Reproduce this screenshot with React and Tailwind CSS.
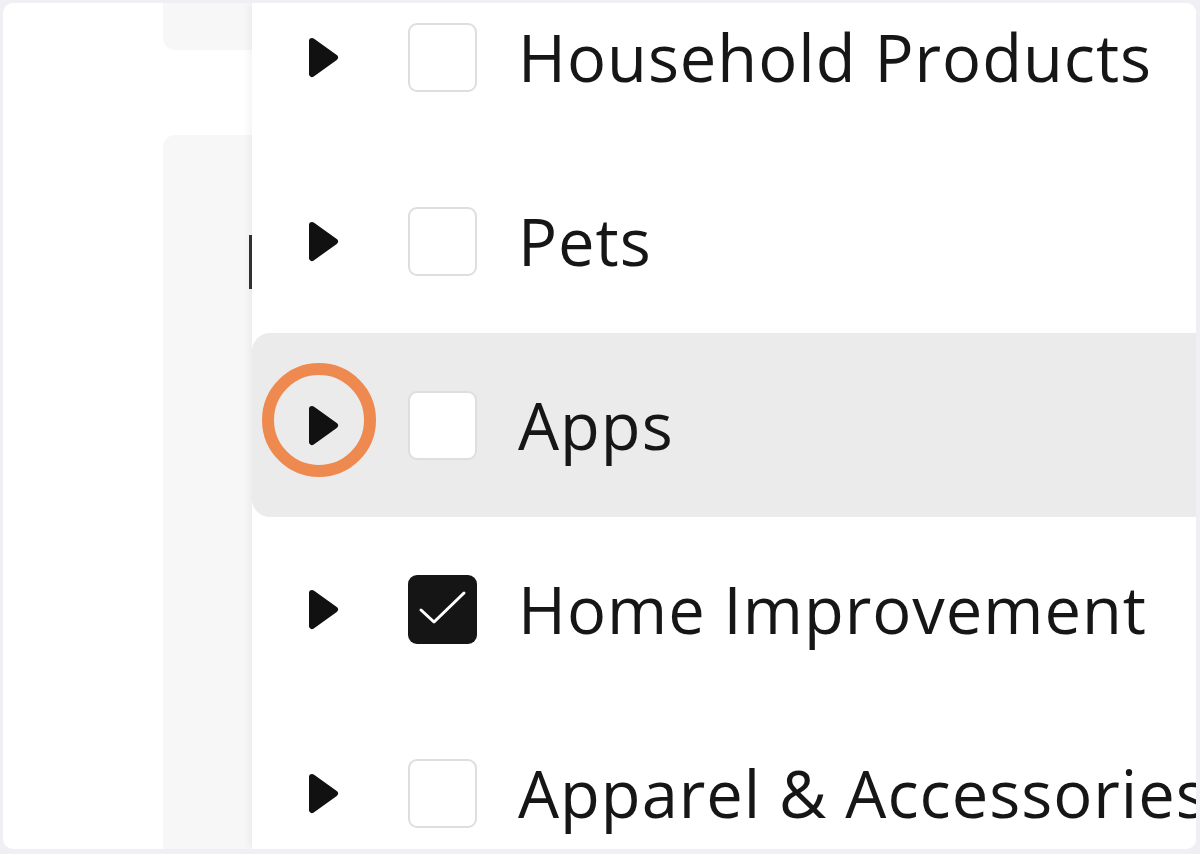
import React from 'react';

const rows = [
  { label: 'Household Products', checked: false },
  { label: 'Pets', checked: false },
  { label: 'Apps', checked: false, active: true },
  { label: 'Home Improvement', checked: true },
  { label: 'Apparel & Accessories', checked: false },
];

const Arrow = () => (
  <svg width="31" height="41" viewBox="0 0 31 41" className="shrink-0">
    <path d="M4 4 L27 20.5 L4 37 Z" fill="#111" stroke="#111" strokeWidth="6" strokeLinejoin="round" />
  </svg>
);

const Checkbox = ({ checked }) =>
  checked ? (
    <div className="w-[69px] h-[69px] shrink-0 rounded-[9px] bg-[#151515] flex items-center justify-center">
      <svg width="69" height="69" viewBox="0 0 69 69">
        <path d="M13 35 L26 47 L56 18" fill="none" stroke="#fff" strokeWidth="3" strokeLinecap="round" strokeLinejoin="round" />
      </svg>
    </div>
  ) : (
    <div className="w-[69px] h-[69px] shrink-0 rounded-[9px] bg-white border-2 border-[#dedede]" />
  );

const Row = ({ label, checked, active }) => (
  <div
    className={`relative h-[184px] flex items-center pl-[56px] rounded-l-[18px] ${
      active ? 'bg-[#ebebeb]' : ''
    }`}
  >
    <Arrow />
    <div className="ml-[69px]">
      <Checkbox checked={checked} />
    </div>
    <span className="ml-[41px] text-[65px] leading-none tracking-[1px] text-[#161616] whitespace-nowrap">
      {label}
    </span>
    {active && (
      <div className="absolute left-[10px] top-[30px] w-[114px] h-[114px] rounded-full border-[12px] border-[#ee8a4f]" />
    )}
  </div>
);

export default function App() {
  return (
    <div
      className="w-[1200px] h-[854px] bg-[#f0eff4] p-[3px] pb-[5px] pr-[4px]"
      style={{ fontFamily: '"Open Sans", Lato, sans-serif' }}
    >
      <div className="w-full h-full bg-white rounded-[10px] overflow-hidden flex">
        <div className="w-[160px] shrink-0" />
        <div className="w-[89px] shrink-0 flex flex-col">
          <div className="h-[47px] bg-[#f7f7f8] rounded-bl-[12px]" />
          <div className="h-[85px]" />
          <div className="flex-1 bg-[#f7f7f8] rounded-tl-[12px] flex flex-col items-end">
            <div className="mt-[100px] w-[3px] h-[54px] bg-[#333]" />
          </div>
        </div>
        <div className="flex-1 bg-white shadow-[-3px_0_8px_rgba(0,0,0,0.05)] overflow-hidden">
          <div className="-mt-[38px]">
            {rows.map((r) => (
              <Row key={r.label} {...r} />
            ))}
          </div>
        </div>
      </div>
    </div>
  );
}
